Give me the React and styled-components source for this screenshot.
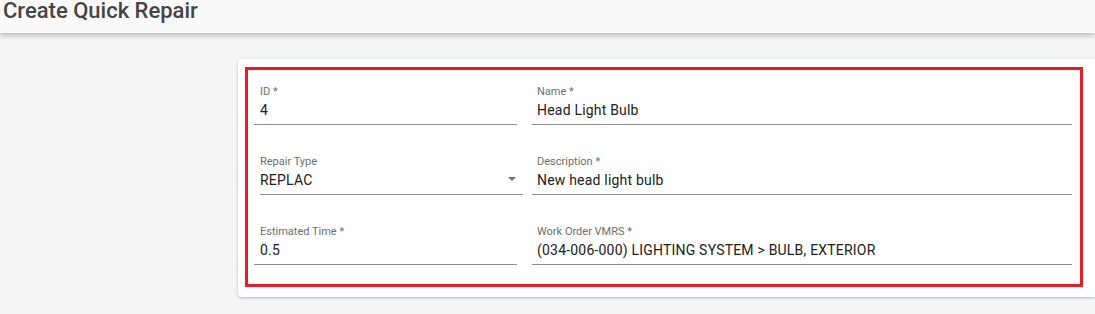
import React from "react";
import styled, { createGlobalStyle } from "styled-components";

const GlobalStyle = createGlobalStyle`
  html, body {
    margin: 0;
    padding: 0;
    background: #f4f5f7;
    font-family: Roboto, "Liberation Sans", Arial, sans-serif;
    overflow: hidden;
  }
  * { box-sizing: border-box; }
`;

const Page = styled.div`
  display: flex;
  flex-direction: column;
  min-height: 314px;
`;

const Header = styled.header`
  height: 33px;
  padding: 1px 0 0 3px;
  background: #fafafa;
  box-shadow: 0 2px 6px rgba(0, 0, 0, 0.28);
  position: relative;
  z-index: 1;
`;

const Title = styled.h1`
  margin: 0;
  font-size: 22px;
  line-height: 20px;
  font-weight: 500;
  color: #454545;
`;

const Main = styled.main`
  display: flex;
  padding: 26px 0 0 238px;
`;

const Card = styled.section`
  flex: 1;
  background: #ffffff;
  border-radius: 4px 0 0 4px;
  box-shadow: 0 1px 3px rgba(0, 0, 0, 0.25);
  padding: 8px 12px 10px 7px;
`;

const Highlight = styled.div`
  border: 3px solid #ed1c24;
  padding: 15px 8px 19px 6px;
  display: grid;
  grid-template-columns: 263px 1fr;
  column-gap: 15px;
  row-gap: 30px;
`;

const Field = styled.div`
  display: flex;
  flex-direction: column;
  border-bottom: 1px solid #8f8f8f;
  padding-left: ${(p) => p.$inset}px;
  margin-left: ${(p) => p.$shift}px;
  margin-right: ${(p) => -p.$shift}px;
  position: relative;
`;

const Label = styled.label`
  font-size: 11px;
  line-height: 13px;
  color: #6e6e6e;
`;

const Value = styled.div`
  font-size: 14px;
  line-height: 20px;
  color: #212121;
  padding: 2px 0 4px;
  letter-spacing: 0.2px;
`;

const Arrow = styled.span`
  position: absolute;
  right: 7px;
  bottom: 13px;
  width: 0;
  height: 0;
  border-left: 4.5px solid transparent;
  border-right: 4.5px solid transparent;
  border-top: 4px solid #757575;
`;

const fields = [
  { label: "ID *", value: "4", inset: 6 },
  { label: "Name *", value: "Head Light Bulb", inset: 5 },
  { label: "Repair Type", value: "REPLAC", inset: 0, shift: 6, select: true },
  { label: "Description *", value: "New head light bulb", inset: 5 },
  { label: "Estimated Time *", value: "0.5", inset: 6 },
  {
    label: "Work Order VMRS *",
    value: "(034-006-000) LIGHTING SYSTEM > BULB, EXTERIOR",
    inset: 5,
  },
];

export default function App() {
  return (
    <Page>
      <GlobalStyle />
      <Header>
        <Title>Create Quick Repair</Title>
      </Header>
      <Main>
        <Card>
          <Highlight>
            {fields.map((f) => (
              <Field key={f.label} $inset={f.inset} $shift={f.shift || 0}>
                <Label>{f.label}</Label>
                <Value>{f.value}</Value>
                {f.select && <Arrow />}
              </Field>
            ))}
          </Highlight>
        </Card>
      </Main>
    </Page>
  );
}
